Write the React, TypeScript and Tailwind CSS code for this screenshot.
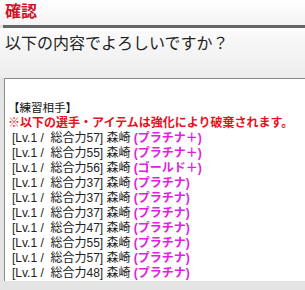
const rows: { power: number; rarity: string }[] = [
  { power: 57, rarity: "(プラチナ＋)" },
  { power: 55, rarity: "(プラチナ＋)" },
  { power: 56, rarity: "(ゴールド＋)" },
  { power: 37, rarity: "(プラチナ)" },
  { power: 37, rarity: "(プラチナ)" },
  { power: 37, rarity: "(プラチナ)" },
  { power: 47, rarity: "(プラチナ)" },
  { power: 55, rarity: "(プラチナ)" },
  { power: 57, rarity: "(プラチナ)" },
  { power: 48, rarity: "(プラチナ)" },
];

export default function App() {
  return (
    <div
      className="w-[305px] h-[290px] overflow-hidden bg-[#e4e4e4] flex flex-col"
      style={{ fontFamily: '"Liberation Sans", "Noto Sans CJK JP", sans-serif' }}
    >
      {/* Title */}
      <div className="h-[25px] shrink-0 bg-gradient-to-b from-[#ffffff] to-[#f4f4f4] px-[5px] pt-[3px]">
        <p className="h-[18px] text-[16px] leading-[18px] font-bold text-[#d0142c]">確認</p>
      </div>
      <div className="ml-[3px] h-[3px] shrink-0 bg-[#666666]" />

      {/* Question */}
      <div className="h-[50px] shrink-0 bg-gradient-to-b from-[#fbfbfb] to-[#ededed] px-[5px] pt-[6px]">
        <p className="h-[20px] text-[16px] leading-[20px] text-[#222222]">以下の内容でよろしいですか？</p>
      </div>

      {/* Content box */}
      <div className="ml-[4px] h-[203px] shrink-0 overflow-hidden border-l border-t border-[#8a8a8a] bg-white pt-[22px] pl-[3px] text-[12px] leading-[15px]">
        <p className="h-[15px] text-[11.5px] text-[#111111]">【練習相手】</p>
        <p className="h-[15px] font-bold text-[#e8101c]">※以下の選手・アイテムは強化により破棄されます。</p>
        {rows.map((r, i) => (
          <p key={i} className="h-[15px] pl-[4px] text-[#222222] whitespace-pre">
            [Lv.1 /  総合力{r.power}] 森崎 <span className="font-bold text-[#e020e0]">{r.rarity}</span>
          </p>
        ))}
      </div>
    </div>
  );
}
